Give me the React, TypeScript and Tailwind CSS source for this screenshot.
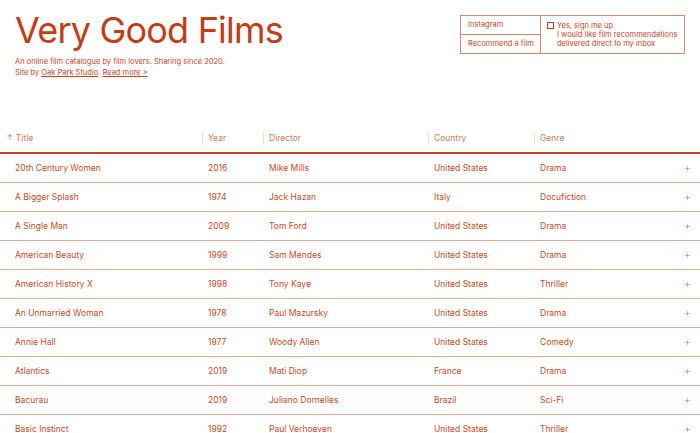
import { Plus } from "lucide-react";

const films = [
  ["20th Century Women", "2016", "Mike Mills", "United States", "Drama"],
  ["A Bigger Splash", "1974", "Jack Hazan", "Italy", "Docufiction"],
  ["A Single Man", "2009", "Tom Ford", "United States", "Drama"],
  ["American Beauty", "1999", "Sam Mendes", "United States", "Drama"],
  ["American History X", "1998", "Tony Kaye", "United States", "Thriller"],
  ["An Unmarried Woman", "1978", "Paul Mazursky", "United States", "Drama"],
  ["Annie Hall", "1977", "Woody Allen", "United States", "Comedy"],
  ["Atlantics", "2019", "Mati Diop", "France", "Drama"],
  ["Bacurau", "2019", "Juliano Dornelles", "Brazil", "Sci-Fi"],
  ["Basic Instinct", "1992", "Paul Verhoeven", "United States", "Thriller"],
];

const cols = "grid grid-cols-[202px_61px_165px_106px_1fr_16px]";

export default function App() {
  return (
    <div className="h-screen bg-white text-[#c4441f] font-['Inter',sans-serif] overflow-hidden">
      {/* header */}
      <div className="flex justify-between px-[15px] pt-[8px]">
        <div>
          <h1 className="text-[36px] leading-[44px] font-normal tracking-[-0.8px] text-[#c23c17]">Very Good Films</h1>
          <p className="mt-[4px] text-[7.5px] leading-[11px]">
            An online film catalogue by film lovers. Sharing since 2020.
          </p>
          <p className="text-[7.5px] leading-[11px]">
            Site by <span className="underline">Oak Park Studio</span>.{" "}
            <span className="underline">Read more &gt;</span>
          </p>
        </div>
        <div className="mt-[7px] flex h-[39px] border border-[#d9866b] text-[7.5px]">
          <div className="flex w-[80px] flex-col border-r border-[#d9866b]">
            <div className="flex h-[19px] items-center border-b border-[#d9866b] pl-[7px]">Instagram</div>
            <div className="flex h-[18px] items-center pl-[7px]">Recommend a film</div>
          </div>
          <div className="flex w-[143px] gap-[3px] pl-[6px] pt-[5px] leading-[9px]">
            <span className="mt-[1px] h-[7px] w-[7px] shrink-0 border border-[#c4441f]" />
            <div className="whitespace-nowrap">
              <div>Yes, sign me up</div>
              <div>I would like film recommendations</div>
              <div>delivered direct to my inbox</div>
            </div>
          </div>
        </div>
      </div>

      {/* table */}
      <div className="mt-[47px]">
        <div className={`${cols} h-[29px] items-center border-b-2 border-[#c4441f] text-[8.5px] text-[#d47a5c]`}>
          <div className="flex items-center gap-[3px] pl-[7px]">
            <span className="text-[7px]">↑</span>
            <span>Title</span>
          </div>
          <div className="border-l border-[#f3ddd5] pl-[5px]">Year</div>
          <div className="border-l border-[#f3ddd5] pl-[5px]">Director</div>
          <div className="border-l border-[#f3ddd5] pl-[5px]">Country</div>
          <div className="border-l border-[#f3ddd5] pl-[5px]">Genre</div>
          <div />
        </div>
        {films.map((f) => (
          <div key={f[0]} className={`${cols} h-[29px] items-center border-b border-[#e8ad99] text-[8.5px] text-[#c74b27]`}>
            <div className="pl-[15px]">{f[0]}</div>
            <div className="pl-[6px]">{f[1]}</div>
            <div className="pl-[6px]">{f[2]}</div>
            <div className="pl-[6px]">{f[3]}</div>
            <div className="pl-[6px]">{f[4]}</div>
            <div className="flex items-center">
              <Plus size={7} strokeWidth={1.5} />
            </div>
          </div>
        ))}
      </div>
    </div>
  );
}
